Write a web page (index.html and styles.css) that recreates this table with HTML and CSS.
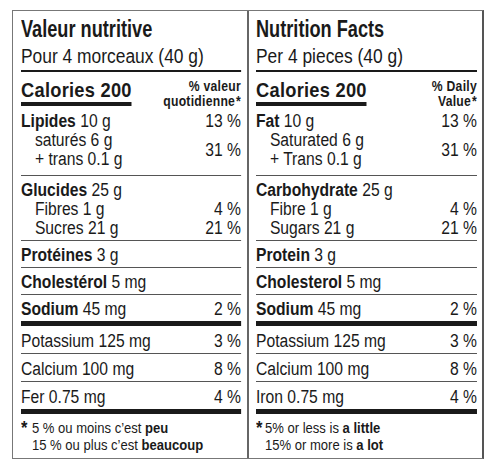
FILE: index.html
```html
<!DOCTYPE html>
<html lang="fr">
<head>
<meta charset="utf-8">
<title>Valeur nutritive / Nutrition Facts</title>
<link rel="stylesheet" href="styles.css">
</head>
<body>
<div class="label">
  <section class="panel fr">
    <div class="inner">
    <div class="title">Valeur nutritive</div>
    <div class="serving">Pour 4 morceaux (40 g)</div>
    <div class="cal-row">
      <span class="cal">Calories 200</span>
      <span class="dv">% valeur<br>quotidienne<span class="star">*</span></span>
    </div>
    <div class="block b-fat">
      <div class="line"><span><b>Lipides</b> 10 g</span><span>13 %</span></div>
      <div class="pair">
        <div class="pair-lines"><div>saturés 6 g</div><div>+ trans 0.1 g</div></div>
        <span>31 %</span>
      </div>
    </div>
    <div class="block b-carb">
      <div class="line"><span><b>Glucides</b> 25 g</span></div>
      <div class="line sub"><span>Fibres 1 g</span><span>4 %</span></div>
      <div class="line sub"><span>Sucres 21 g</span><span>21 %</span></div>
    </div>
    <div class="row"><span><b>Protéines</b> 3 g</span></div>
    <div class="row"><span><b>Cholestérol</b> 5 mg</span></div>
    <div class="row heavy"><span><b>Sodium</b> 45 mg</span><span>2 %</span></div>
    <div class="row low"><span>Potassium 125 mg</span><span>3 %</span></div>
    <div class="row low"><span>Calcium 100 mg</span><span>8 %</span></div>
    <div class="row low heavy"><span>Fer 0.75 mg</span><span>4 %</span></div>
    <div class="foot">
      <span class="fstar">*</span>
      <div class="foot-text"><div>5 % ou moins c’est <b>peu</b></div><div>15 % ou plus c’est <b>beaucoup</b></div></div>
    </div>
    </div>
  </section>
  <section class="panel en">
    <div class="inner">
    <div class="title">Nutrition Facts</div>
    <div class="serving">Per 4 pieces (40 g)</div>
    <div class="cal-row">
      <span class="cal">Calories 200</span>
      <span class="dv">% Daily<br>Value<span class="star">*</span></span>
    </div>
    <div class="block b-fat">
      <div class="line"><span><b>Fat</b> 10 g</span><span>13 %</span></div>
      <div class="pair">
        <div class="pair-lines"><div>Saturated 6 g</div><div>+ Trans 0.1 g</div></div>
        <span>31 %</span>
      </div>
    </div>
    <div class="block b-carb">
      <div class="line"><span><b>Carbohydrate</b> 25 g</span></div>
      <div class="line sub"><span>Fibre 1 g</span><span>4 %</span></div>
      <div class="line sub"><span>Sugars 21 g</span><span>21 %</span></div>
    </div>
    <div class="row"><span><b>Protein</b> 3 g</span></div>
    <div class="row"><span><b>Cholesterol</b> 5 mg</span></div>
    <div class="row heavy"><span><b>Sodium</b> 45 mg</span><span>2 %</span></div>
    <div class="row low"><span>Potassium 125 mg</span><span>3 %</span></div>
    <div class="row low"><span>Calcium 100 mg</span><span>8 %</span></div>
    <div class="row low heavy"><span>Iron 0.75 mg</span><span>4 %</span></div>
    <div class="foot en-foot">
      <span class="fstar">*</span>
      <div class="foot-text"><div>5% or less is <b>a little</b></div><div>15% or more is <b>a lot</b></div></div>
    </div>
    </div>
  </section>
</div>
</body>
</html>
```

FILE: styles.css
```css
* { box-sizing: border-box; }
html, body { margin: 0; padding: 0; background: #fff; overflow: hidden; }
body {
  font-family: "Liberation Sans", Arial, sans-serif;
  color: #1a1a1a;
}
b { font-weight: 700; }

.label {
  display: flex;
  width: 472px;
  height: 449px;
  margin: 10px 0 0 12px;
  border: 1px solid #777;
  border-right: 2px solid #555;
}
.panel { overflow: hidden; }
.fr { width: 236px; padding: 5px 6px 0 8px; border-right: 2px solid #666; }
.en { width: 233px; padding: 5px 5px 0 7px; }

/* condensed type: Helvetica Condensed look from a regular sans */
.inner { transform: scaleX(0.87); transform-origin: 0 0; }
.fr .inner { width: 252.9px; }
.en .inner { width: 254px; }

.title { font-size: 24px; line-height: 26px; font-weight: 700; transform: scaleX(0.87); transform-origin: 0 0; }
.serving { font-size: 20px; line-height: 22px; margin-top: 3px; padding-bottom: 3px; border-bottom: 2px solid #1a1a1a; }

.cal-row {
  display: flex; justify-content: space-between; align-items: flex-start;
  height: 40px; padding-top: 7px;
}
.cal {
  font-size: 21px; line-height: 21px; font-weight: 700; letter-spacing: 0.3px;
  padding-bottom: 2px; border-bottom: 4px solid #1a1a1a;
}
.dv { font-size: 14px; line-height: 15px; font-weight: 700; text-align: right; letter-spacing: 0.3px; }
.star { font-size: 14px; padding-left: 1px; }

.block, .row { font-size: 18px; line-height: 19px; }
.line, .row, .pair { display: flex; justify-content: space-between; }
.b-fat { padding-bottom: 6px; border-bottom: 1px solid #555; }
.pair { align-items: center; padding-left: 16px; }
.b-carb { padding: 5px 0 2px; border-bottom: 1px solid #555; }
.sub { padding-left: 16px; }
.row { padding: 5px 0 2px; border-bottom: 1px solid #555; }
.row.low { padding: 6px 0 2px; }
.row.heavy { border-bottom: 5px solid #1a1a1a; }

.foot { display: flex; font-size: 15px; line-height: 17px; padding-top: 5px; }
.fstar { width: 12.6px; font-weight: 700; font-size: 19px; line-height: 17px; }
.en-foot .fstar { width: 10.3px; }
```
